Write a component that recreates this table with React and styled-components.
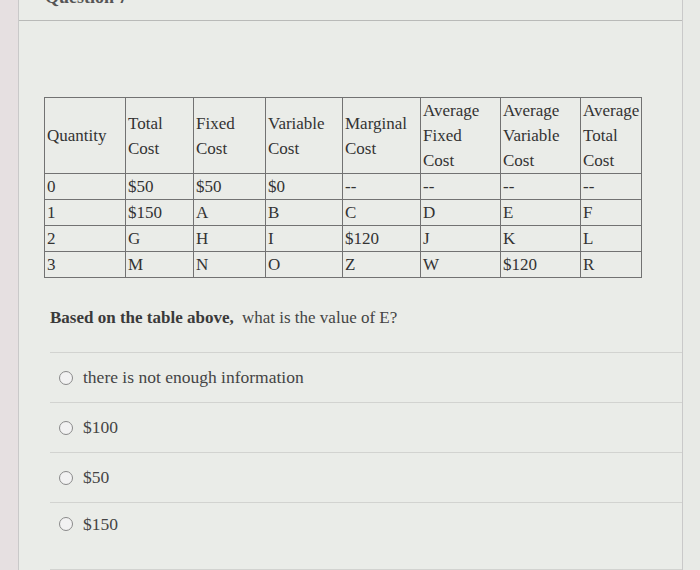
import React from 'react';
import styled, { createGlobalStyle } from 'styled-components';

const serif = `"Liberation Serif", "Times New Roman", "DejaVu Serif", serif`;

const GlobalStyle = createGlobalStyle`
  body {
    margin: 0;
    background: #e8eae6;
    font-family: ${serif};
    color: #3a3a3a;
  }
`;

const Page = styled.div`
  width: 700px;
  height: 570px;
  display: flex;
  overflow: hidden;
  font-family: ${serif};
`;

const Gutter = styled.div`
  flex: 0 0 18px;
  background: #e6e0e1;
  border-right: 1px solid #c9c9c9;
`;

const Card = styled.div`
  flex: 0 0 663px;
  display: flex;
  flex-direction: column;
  border-right: 1px solid #c9c9c9;
  background: #eaece8;
`;

const CardHeader = styled.div`
  flex: 0 0 20px;
  height: 20px;
  border-bottom: 1px solid #b9bab8;
  overflow: hidden;
  padding-left: 26px;
  & h2 {
    margin: -13px 0 0;
    font-family: ${serif};
    font-size: 18px;
    font-weight: 700;
    color: #555;
  }
`;

const CardBody = styled.div`
  flex: 0 0 auto;
  padding: 76px 0 0 25px;
`;

const Table = styled.table`
  border-collapse: collapse;
  font-family: ${serif};
  font-size: 17px;
  color: #333;
  & td {
    border: 1.5px solid #727272;
    padding: 0 2px;
    text-align: left;
    vertical-align: middle;
    height: 25px;
    line-height: 20px;
  }
`;

const HeadCell = styled.td`
  width: ${(props) => props.w}px;
  && {
    height: 72px;
    line-height: 25px;
  }
`;

const Question = styled.p`
  margin: 30px 0 0 6px;
  font-family: ${serif};
  font-size: 17px;
  line-height: 20px;
  color: #444;
  & b {
    font-weight: 700;
    color: #3a3a3a;
    margin-right: 4px;
  }
`;

const Options = styled.div`
  margin: 24px 0 0 6px;
`;

const Option = styled.label`
  display: flex;
  align-items: center;
  gap: 10px;
  height: ${(props) => (props.last ? 42 : 49)}px;
  padding: 0 0 ${(props) => (props.last ? 24 : 0)}px 9px;
  border-top: 1px solid #d2d3d0;
  border-bottom: ${(props) => (props.last ? '1px solid #d2d3d0' : 'none')};
  font-family: ${serif};
  font-size: 17.5px;
  color: #444;
`;

const Radio = styled.span`
  width: 12px;
  height: 12px;
  border-radius: 50%;
  border: 1.5px solid #8a8a8a;
  background: #f2f2f2;
  flex: 0 0 auto;
`;

const headers = [
  { w: 76, label: ['Quantity'] },
  { w: 63, label: ['Total', 'Cost'] },
  { w: 67, label: ['Fixed', 'Cost'] },
  { w: 72, label: ['Variable', 'Cost'] },
  { w: 73, label: ['Marginal', 'Cost'] },
  { w: 75, label: ['Average', 'Fixed', 'Cost'] },
  { w: 75, label: ['Average', 'Variable', 'Cost'] },
  { w: 55, label: ['Average', 'Total', 'Cost'] },
];

const rows = [
  ['0', '$50', '$50', '$0', '--', '--', '--', '--'],
  ['1', '$150', 'A', 'B', 'C', 'D', 'E', 'F'],
  ['2', 'G', 'H', 'I', '$120', 'J', 'K', 'L'],
  ['3', 'M', 'N', 'O', 'Z', 'W', '$120', 'R'],
];

const options = ['there is not enough information', '$100', '$50', '$150'];

const App = () => (
  <>
    <GlobalStyle />
    <Page>
      <Gutter />
      <Card>
        <CardHeader>
          <h2>Question 7</h2>
        </CardHeader>
        <CardBody>
          <Table>
            <tbody>
              <tr>
                {headers.map((h) => (
                  <HeadCell key={h.label.join()} w={h.w}>
                    {h.label.map((l, i) => (
                      <React.Fragment key={l}>
                        {i > 0 && <br />}
                        {l}
                      </React.Fragment>
                    ))}
                  </HeadCell>
                ))}
              </tr>
              {rows.map((r) => (
                <tr key={r[0]}>
                  {r.map((c, i) => (
                    <td key={i}>{c}</td>
                  ))}
                </tr>
              ))}
            </tbody>
          </Table>
          <Question>
            <b>Based on the table above,</b> what is the value of E?
          </Question>
          <Options>
            {options.map((o, i) => (
              <Option key={o} last={i === options.length - 1}>
                <Radio />
                {o}
              </Option>
            ))}
          </Options>
        </CardBody>
      </Card>
    </Page>
  </>
);

export default App;
